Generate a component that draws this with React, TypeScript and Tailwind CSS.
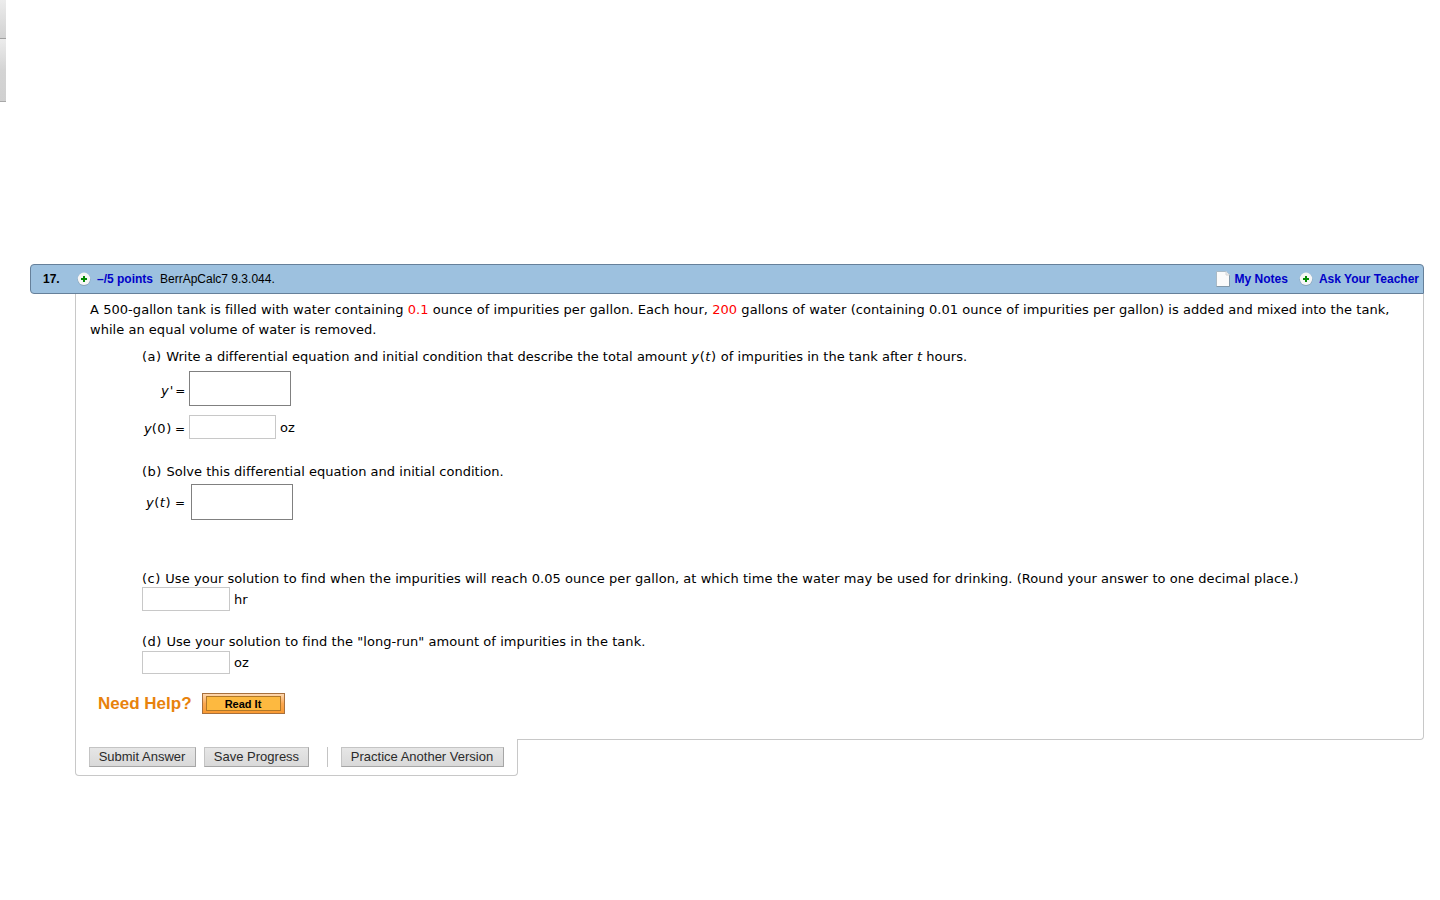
import React from "react";

function PlusBadge() {
  return (
    <svg width="14" height="14" viewBox="0 0 14 14" className="block shrink-0">
      <circle cx="7" cy="7.4" r="6.5" fill="#7f97a8" opacity="0.7" />
      <circle cx="7" cy="6.8" r="6.2" fill="#f6f6f6" />
      <path d="M7 4v6M4 7h6" stroke="#058a05" strokeWidth="2" fill="none" />
    </svg>
  );
}

function NoteIcon() {
  return (
    <svg width="14" height="16" viewBox="0 0 14 16" className="block shrink-0">
      <path d="M0.5 0.5H10L13.5 4V15.5H0.5Z" fill="#fbfbfb" stroke="#a9bac6" strokeWidth="1" />
      <path d="M13.5 4V15.5H0.5" fill="none" stroke="#8299ab" strokeWidth="1" />
      <path d="M10 0.5V4H13.5" fill="#eeeeee" stroke="#d6d6d6" strokeWidth="1" />
    </svg>
  );
}

function SmallInput({ className }: { className: string }) {
  return <input aria-label="answer" className={`block shrink-0 border border-[#c8c8c8] bg-white outline-none ${className}`} />;
}

function MathInput({ className }: { className: string }) {
  return <div className={`w-[102px] shrink-0 border border-[#808080] bg-white ${className}`} />;
}

function PartLabel({ children }: { children: React.ReactNode }) {
  return <span className="mr-[4.5px] tracking-[0.5px]">{children}</span>;
}

function GreyButton({ className, children }: { className: string; children: React.ReactNode }) {
  return (
    <button
      className={`block h-5 shrink-0 whitespace-nowrap border border-[#c4c4c4] border-r-[#a6a6a6] border-b-[#a6a6a6] bg-linear-to-b from-[#e6e6e6] to-[#d9d9d9] text-center font-['Liberation_Sans',sans-serif] text-[13px] leading-[18px] text-[#2b2b2b] ${className}`}
    >
      {children}
    </button>
  );
}

export default function App() {
  return (
    <div className="flex h-[900px] w-[1440px] overflow-hidden bg-white font-['DejaVu_Sans',sans-serif] text-[13px] leading-5 text-black">
      <aside className="w-[6px] shrink-0">
        <div className="h-[39px] border-b border-[#a0a0a0] bg-linear-to-b from-[#ececec] to-[#d2d2d2]" />
        <div className="h-[63px] border-b border-[#a8a8a8] bg-linear-to-b from-[#ececec] via-[#d4d4d4] to-[#d0d0d0]" />
      </aside>

      <main className="ml-6 w-[1394px] shrink-0 pt-[264px]">
        <header className="flex h-[30px] items-center rounded-l-[4px] rounded-tr-[4px] border border-[#66809a] bg-[#9dc1df] pr-1 pl-3 font-['Liberation_Sans',sans-serif] text-[12px] whitespace-nowrap">
          <span className="w-[34px] font-bold">17.</span>
          <PlusBadge />
          <span className="ml-[6px] w-[63px] font-bold text-[#0000c8]">–/5 points</span>
          <span>BerrApCalc7 9.3.044.</span>
          <span className="ml-auto" />
          <NoteIcon />
          <span className="ml-[5px] font-bold text-[#0000c8]">My Notes</span>
          <span className="w-[11px]" />
          <PlusBadge />
          <span className="ml-[6px] font-bold text-[#0000c8]">Ask Your Teacher</span>
        </header>

        <section className="ml-[45px] h-[446px] rounded-br-[4px] border-x border-b border-[#c8c8c8] pt-[6px] pl-[14px] whitespace-nowrap">
          <p className="tracking-[0.055px]">
            A 500-gallon tank is filled with water containing <span className="text-[#ff0000]">0.1</span> ounce of impurities per gallon. Each hour,{" "}
            <span className="text-[#ff0000]">200</span> gallons of water (containing 0.01 ounce of impurities per gallon) is added and mixed into the tank,
          </p>
          <p className="tracking-[0.03px]">while an equal volume of water is removed.</p>

          <div className="pl-[52px]">
            <p className="mt-[7px] tracking-[0.025px]">
              <PartLabel>(a)</PartLabel>
              Write a differential equation and initial condition that describe the total amount{" "}
              <span className="tracking-[0.6px]"><i>y</i>(<i>t</i>)</span> of impurities in the tank after <i>t</i> hours.
            </p>
            <div className="mt-1 flex h-[35px] items-start">
              <span className="w-[47px] pt-[10px] pl-[19px]"><i>y</i><i className="ml-px">'</i><span className="ml-[2px] text-[12px]">=</span></span>
              <MathInput className="h-[35px]" />
            </div>
            <div className="mt-[9px] flex h-6 items-center">
              <span className="w-[47px] pt-1 pl-[2px]"><i>y</i><span className="tracking-[0.6px]">(0)</span><span className="ml-[3px] text-[12px]">=</span></span>
              <SmallInput className="h-6 w-[87px]" />
              <span className="ml-1 pt-[2px]">oz</span>
            </div>
            <p className="mt-[23px] tracking-[0.015px]">
              <PartLabel>(b)</PartLabel>
              Solve this differential equation and initial condition.
            </p>
            <div className="mt-[2px] flex h-9 items-center">
              <span className="w-[49px] pt-[2px] pl-1"><span className="tracking-[0.5px]"><i>y</i>(<i>t</i>)</span><span className="ml-1 text-[12px]">=</span></span>
              <MathInput className="h-9" />
            </div>
            <p className="mt-[49px] tracking-[0.05px]">
              <PartLabel>(c)</PartLabel>
              Use your solution to find when the impurities will reach 0.05 ounce per gallon, at which time the water may be used for drinking. (Round your answer to one decimal place.)
            </p>
            <div className="-mt-[2px] flex h-6 items-center">
              <SmallInput className="h-6 w-[88px]" />
              <span className="ml-1 pt-[2px]">hr</span>
            </div>
            <p className="mt-[21px] tracking-[0.065px]">
              <PartLabel>(d)</PartLabel>
              Use your solution to find the "long-run" amount of impurities in the tank.
            </p>
            <div className="-mt-[1px] flex h-[23px] items-center">
              <SmallInput className="h-[23px] w-[88px]" />
              <span className="ml-1 pt-px">oz</span>
            </div>
          </div>

          <div className="mt-[19px] flex h-[21px] items-center pl-2 font-['Liberation_Sans',sans-serif] font-bold">
            <span className="w-[104px] text-[17px] text-[#e8820c]">Need Help?</span>
            <button className="h-[21px] w-[83px] border border-[#a8703c] bg-linear-to-b from-[#fdd8b0] via-[#fba850] to-[#f99a30] p-[3px] pt-[2px]">
              <span className="block h-[15px] w-full border border-[#b07828] bg-[#fdb940] pr-px text-center text-[11px] leading-[14px]">Read It</span>
            </button>
          </div>
        </section>

        <footer className="relative -mt-px ml-[45px] flex h-[37px] w-[443px] items-start rounded-b-[4px] border-x border-b border-[#c8c8c8] bg-white pt-2 pl-[13px]">
          <GreyButton className="w-[107px] pr-px">Submit Answer</GreyButton>
          <GreyButton className="ml-2 w-[105px]">Save Progress</GreyButton>
          <div className="mr-[13px] ml-[18px] h-5 w-px bg-[#c4c4c4]" />
          <GreyButton className="w-[163px] pr-px">Practice Another Version</GreyButton>
        </footer>
      </main>
    </div>
  );
}
